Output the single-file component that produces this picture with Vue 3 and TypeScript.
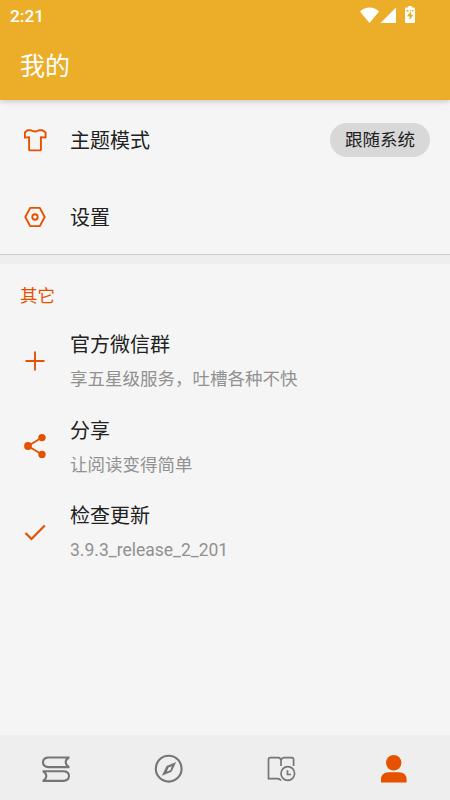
<script setup lang="ts">
import { ref } from 'vue'

interface Entry {
  icon: 'plus' | 'share' | 'check'
  title: string
  detail: string
}

const entries: Entry[] = [
  { icon: 'plus', title: '官方微信群', detail: '享五星级服务，吐槽各种不快' },
  { icon: 'share', title: '分享', detail: '让阅读变得简单' },
  { icon: 'check', title: '检查更新', detail: '3.9.3_release_2_201' },
]

const tabs = ['books', 'explore', 'history', 'mine'] as const
const active = ref<(typeof tabs)[number]>('mine')
</script>

<template>
  <div class="screen">
    <header class="header">
      <div class="status">
        <span class="time">2:21</span>
        <svg class="status-icons" width="58" height="20" viewBox="0 0 58 20">
          <path d="M0 5.4C5.4.2 13.6.2 19 5.400L9.500 17Z" />
          <path d="M36 1.500v15.500H20.500Z" />
          <path d="M48.200 0h3.600v1.500h2q1.200 0 1.200 1.200v13.100q0 1.200-1.200 1.200h-7.600q-1.200 0-1.200-1.200V2.700q0-1.200 1.200-1.200h2Z" />
          <path class="bolt" d="M51 5l-4 5.300h2.500V14l4-5.300H51ZM46.600 4h2v1.800h-2Zm3.400 0h1v1h-1Zm2 0h1.500v1.500H52Z" />
        </svg>
      </div>
      <h1 class="heading">我的</h1>
    </header>

    <main class="content">
      <section class="group">
        <div class="row">
          <svg class="icon" width="30" height="30" viewBox="0 0 30 30">
            <path d="M10.900 5.200Q15 7.700 19.100 5.200H22.500L25.600 7.400V12.600L20.900 12.100V24.400Q20.900 25.400 19.900 25.400H10.100Q9.100 25.400 9.100 24.400V12.100L4.900 12.600V7.400L7.500 5.200Z" />
          </svg>
          <span class="title">主题模式</span>
          <button class="pill" type="button">跟随系统</button>
        </div>
        <div class="row">
          <svg class="icon" width="30" height="30" viewBox="0 0 30 30">
            <path d="M10.200 5.900H19.800L24.700 15L19.800 24.100H10.200L5.300 15Z" />
            <circle cx="15" cy="15" r="2.700" />
          </svg>
          <span class="title">设置</span>
        </div>
      </section>

      <section class="others">
        <h2 class="section-title">其它</h2>
        <div v-for="entry in entries" :key="entry.title" class="entry">
          <svg class="icon" width="30" height="30" viewBox="0 0 30 30">
            <path v-if="entry.icon === 'plus'" d="M15 5.500V24.500M5.500 15H24.500" />
            <g v-else-if="entry.icon === 'share'">
              <path d="M22 6.500L8 15L22 23.500" />
              <g class="dots">
                <circle cx="22" cy="6.600" r="3.700" />
                <circle cx="8" cy="15" r="3.900" />
                <circle cx="22" cy="23.400" r="3.700" />
              </g>
            </g>
            <path v-else class="check" d="M5.500 16L11.500 22L24.800 8.500" />
          </svg>
          <div class="texts">
            <span class="title">{{ entry.title }}</span>
            <span class="detail">{{ entry.detail }}</span>
          </div>
        </div>
      </section>
    </main>

    <nav class="tabs">
      <button
        v-for="tab in tabs"
        :key="tab"
        type="button"
        class="tab"
        :class="{ active: active === tab }"
        @click="active = tab"
      >
        <svg width="32" height="32" viewBox="0 0 32 32">
          <g v-if="tab === 'books'">
            <path d="M29.500 4.500H8Q3 5 3 9.300T8 14.100H29.500M28.800 4.500Q25.700 6.500 25.700 9.300T28.800 14.100" />
            <path d="M2.500 18.300H24Q29 18.800 29 23.100T24 27.900H2.500M3.200 18.300Q6.300 20.300 6.300 23.100T3.200 27.900" />
          </g>
          <g v-else-if="tab === 'explore'">
            <circle cx="15.700" cy="15.700" r="12.900" />
            <path class="needle" fill-rule="evenodd" d="M23.200 9L18.600 18.800L8.800 22.800L13.600 13.100ZM15.600 14.600L13.800 18.600L17.400 17.300L18.800 13.300Z" />
          </g>
          <g v-else-if="tab === 'history'" class="thin">
            <path d="M16 13V7Q15.300 4.700 13.300 4.700H5.300Q3.500 4.700 3.500 6.500V25.700H12.300Q14.800 25.700 16 27.600M16 7Q17.100 4.700 18.800 4.700H26.800Q28.600 4.700 28.600 6.500V13" />
            <circle cx="22.800" cy="20.500" r="6.800" />
            <path d="M22.500 17.300V21.500H26" />
          </g>
          <g v-else class="person">
            <circle cx="15.700" cy="9.700" r="7.700" />
            <path d="M3 29.500V27Q3 19.300 10.500 19.300H21Q28.600 19.300 28.600 27V29.500Z" />
          </g>
        </svg>
      </button>
    </nav>
  </div>
</template>

<style>
body {
  margin: 0;
}
</style>

<style scoped>
.screen {
  display: flex;
  flex-direction: column;
  height: 800px;
  overflow: hidden;
  background: #f5f5f5;
  color: #212121;
  font-family: Roboto, 'Noto Sans CJK SC', sans-serif;
}

.header {
  flex: none;
  height: 100px;
  background: #ecae29;
  color: #fff;
  box-shadow: 0 1px 6px rgba(0, 0, 0, 0.22);
  z-index: 1;
}

.status {
  display: flex;
  justify-content: space-between;
  height: 32px;
  padding: 6px 32px 0 10px;
  box-sizing: border-box;
}

.time {
  font-size: 17.3px;
  font-weight: 500;
  line-height: 20px;
}

.status-icons {
  fill: #fff;
}

.status-icons .bolt {
  fill: #ecae29;
}

.heading {
  margin: 0;
  padding: 17px 20px 0;
  font-size: 25px;
  font-weight: 400;
  line-height: 36px;
}

.content {
  flex: 1;
}

.group {
  padding-top: 1px;
  border-bottom: 1px solid #ccc;
}

.row {
  display: flex;
  align-items: center;
  height: 77px;
  padding: 0 20px;
}

.row .title {
  padding-top: 2px;
}

.row:last-child {
  height: 74px;
  padding-top: 2px;
}

.icon {
  flex: none;
  margin-right: 20px;
  fill: none;
  stroke: #e65100;
  stroke-width: 1.9;
  stroke-linejoin: round;
}

.icon .dots {
  fill: #e65100;
  stroke: none;
}

.icon .check {
  stroke-width: 2.2;
  stroke-linejoin: miter;
}

.title {
  font-size: 20px;
  line-height: 30px;
}

.pill {
  width: 100px;
  height: 34px;
  margin-left: auto;
  padding: 0;
  border: 0;
  border-radius: 17px;
  background: #d8d8d8;
  color: #212121;
  font: inherit;
  font-size: 17.5px;
  line-height: 34px;
}

.others {
  padding-top: 19px;
  border-top: 9px solid #eee;
}

.section-title {
  margin: 0 0 15px 20px;
  color: #e65100;
  font-size: 17.5px;
  font-weight: 400;
  line-height: 26px;
}

.entry {
  display: flex;
  align-items: center;
  height: 73px;
  margin-bottom: 12.7px;
  padding-left: 20px;
}

.texts {
  display: flex;
  flex-direction: column;
  gap: 6px;
}

.entry .title {
  padding-top: 1px;
}

.detail {
  color: #919191;
  font-size: 17.5px;
  line-height: 26px;
}

.tabs {
  display: flex;
  flex: none;
  height: 65px;
  background: #eee;
}

.tab {
  display: flex;
  flex: 1;
  align-items: center;
  justify-content: center;
  padding: 2px 0 0;
  border: 0;
  background: none;
}

.tab svg {
  fill: none;
  stroke: #757575;
  stroke-width: 2.1;
}

.tab .needle {
  fill: #757575;
  stroke: none;
}

.tab .thin {
  stroke-width: 1.7;
}

.tab .person {
  fill: #e65100;
  stroke: none;
}
</style>
